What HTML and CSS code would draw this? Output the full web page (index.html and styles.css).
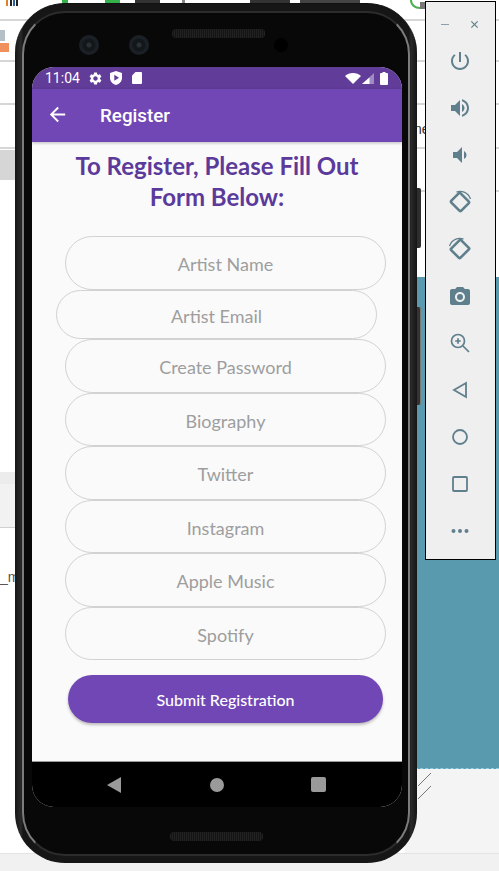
FILE: index.html
```html
<!DOCTYPE html>
<html lang="en">
<head>
  <meta charset="UTF-8" />
  <meta name="viewport" content="width=device-width, initial-scale=1" />
  <title>Register</title>
  <link rel="stylesheet" href="styles.css">
</head>
<body>

  <!-- desktop behind the emulator -->
  <div class="desk">
    <div class="desk-ticks"></div>
    <div class="desk-line line-a"></div>
    <div class="desk-line line-b"></div>
    <div class="desk-line line-c"></div>
    <div class="desk-line line-d"></div>
    <div class="desk-line line-e"></div>
    <div class="desk-chip chip-grey"></div>
    <div class="desk-chip chip-orange"></div>
    <div class="desk-block block-grey"></div>
    <div class="desk-block block-light"></div>
    <span class="desk-text text-m">_m</span>
    <span class="desk-text text-ne">ne</span>
    <svg class="desk-arc" width="16" height="10" viewBox="0 0 16 10">
      <path d="M2 0c0 5 4 8 9 8" stroke="#4caf50" stroke-width="2" fill="none"/>
      <rect x="11" y="2" width="5" height="7" fill="#777"/>
    </svg>
    <div class="desk-teal"></div>
    <div class="desk-lower"></div>
    <div class="desk-footer"></div>
    <svg class="desk-grip" width="16" height="28" viewBox="0 0 16 28">
      <path d="M1 14 14 1M1 27 14 14" stroke="#777" stroke-width="1" fill="none"/>
    </svg>
  </div>

  <div class="side-key key-top"></div>
  <div class="side-key key-low"></div>

  <div class="phone">
    <div class="rim">
      <div class="bezel-top">
        <div class="cam"></div>
        <div class="cam"></div>
        <div class="speaker"></div>
        <div class="sensor"></div>
      </div>

      <div class="screen">
        <div class="statusbar">
          <span class="clock">11:04</span>
          <svg class="st-gear" viewBox="0 0 24 24"><path d="M19.14 12.94c.04-.3.06-.61.06-.94 0-.32-.02-.64-.07-.94l2.03-1.58c.18-.14.23-.41.12-.61l-1.92-3.32c-.12-.22-.37-.29-.59-.22l-2.39.96c-.5-.38-1.03-.7-1.62-.94l-.36-2.54c-.04-.24-.24-.41-.48-.41h-3.84c-.24 0-.43.17-.47.41l-.36 2.54c-.59.24-1.13.57-1.62.94l-2.39-.96c-.22-.08-.47 0-.59.22L2.74 8.87c-.12.21-.08.47.12.61l2.03 1.58c-.05.3-.09.63-.09.94s.02.64.07.94l-2.03 1.58c-.18.14-.23.41-.12.61l1.92 3.32c.12.22.37.29.59.22l2.39-.96c.5.38 1.03.7 1.62.94l.36 2.54c.05.24.24.41.48.41h3.84c.24 0 .44-.17.47-.41l.36-2.54c.59-.24 1.13-.56 1.62-.94l2.39.96c.22.08.47 0 .59-.22l1.92-3.32c.12-.22.07-.47-.12-.61l-2.01-1.58zM12 15.6c-1.98 0-3.6-1.62-3.6-3.6s1.62-3.6 3.6-3.6 3.6 1.62 3.6 3.6-1.62 3.6-3.6 3.6z"/></svg>
          <svg class="st-shield" viewBox="0 0 12 14"><path fill-rule="evenodd" d="M6 0 12 2v5c0 3.3-2.5 6-6 7C2.500 13 0 10.300 0 7V2zM4.300 3.800v6L9 6.800z"/></svg>
          <svg class="st-sd" viewBox="0 0 10 12"><path d="M3.500 0H9a1 1 0 0 1 1 1v10a1 1 0 0 1-1 1H1a1 1 0 0 1-1-1V3.500z"/></svg>
          <span class="st-gap"></span>
          <svg class="st-wifi" viewBox="0 0 16 11"><path d="M0 3C2 1.200 4.800 0 8 0s6 1.200 8 3L8 11z"/></svg>
          <svg class="st-signal" viewBox="0 0 12 11"><path d="M12 0v11H0z" opacity=".4"/><path d="M7.500 4.500V11H0z"/></svg>
          <svg class="st-batt" viewBox="0 0 8 13"><path d="M2.500 0h3v1H7a1 1 0 0 1 1 1v10a1 1 0 0 1-1 1H1a1 1 0 0 1-1-1V2a1 1 0 0 1 1-1h1.500z"/></svg>
        </div>

        <header class="appbar">
          <svg class="back" viewBox="0 0 24 24"><path d="M20 11H7.830l5.590-5.590L12 4l-8 8 8 8 1.410-1.410L7.830 13H20v-2z"/></svg>
          <span class="appbar-title">Register</span>
        </header>

        <main class="content">
          <h1 class="heading">To Register, Please Fill Out<br>Form Below:</h1>
          <form class="form">
            <input class="field" type="text" placeholder="Artist Name">
            <input class="field field-email" type="text" placeholder="Artist Email">
            <input class="field" type="password" placeholder="Create Password">
            <input class="field" type="text" placeholder="Biography">
            <input class="field" type="text" placeholder="Twitter">
            <input class="field" type="text" placeholder="Instagram">
            <input class="field" type="text" placeholder="Apple Music">
            <input class="field" type="text" placeholder="Spotify">
            <button class="submit" type="button">Submit Registration</button>
          </form>
        </main>

        <nav class="navbar">
          <svg class="nav-back" viewBox="0 0 14 16"><path d="M14 0v16L0 8z"/></svg>
          <div class="nav-home"></div>
          <div class="nav-recent"></div>
        </nav>
      </div>

      <div class="bezel-bottom">
        <div class="speaker"></div>
      </div>
    </div>
  </div>

  <!-- emulator tool window -->
  <aside class="tools">
    <div class="tools-head">
      <span class="win-min"></span>
      <svg class="win-close" viewBox="0 0 10 10"><path d="M1.500 1.500l7 7M8.500 1.500l-7 7"/></svg>
    </div>
    <svg class="tool" viewBox="0 0 24 24"><path d="M13 3h-2v10h2V3zm4.830 2.170l-1.420 1.420C17.990 7.860 19 9.810 19 12c0 3.870-3.130 7-7 7s-7-3.130-7-7c0-2.190 1.010-4.140 2.580-5.420L6.170 5.170C4.230 6.820 3 9.260 3 12c0 4.970 4.030 9 9 9s9-4.030 9-9c0-2.740-1.230-5.180-3.170-6.830z"/></svg>
    <svg class="tool" viewBox="0 0 24 24"><path d="M3 9v6h4l5 5V4L7 9H3zm13.500 3c0-1.770-1.020-3.290-2.500-4.030v8.050c1.480-.73 2.500-2.250 2.500-4.020zM14 3.230v2.060c2.890.86 5 3.540 5 6.710s-2.110 5.850-5 6.710v2.060c4.010-.91 7-4.490 7-8.770s-2.990-7.860-7-8.770z"/></svg>
    <svg class="tool" viewBox="0 0 24 24"><path d="M18.500 12c0-1.770-1.020-3.290-2.500-4.030v8.050c1.480-.73 2.500-2.250 2.500-4.020zM5 9v6h4l5 5V4L9 9H5z"/></svg>
    <svg class="tool tool-line" viewBox="0 0 24 24"><rect x="5" y="5.500" width="14" height="13" rx="1" transform="rotate(45 12 12)"/><path d="M8.500 2.200C12.500.2 20 1.500 22.500 9" stroke-width="1.300"/></svg>
    <svg class="tool tool-line" viewBox="0 0 24 24"><rect x="5" y="5.500" width="14" height="13" rx="1" transform="rotate(-45 12 12)"/><path d="M15.500 2.200C11.500.2 4 1.500 1.500 9" stroke-width="1.300"/></svg>
    <svg class="tool" viewBox="0 0 24 24"><path d="M9 3L7.170 5H4c-1.100 0-2 .9-2 2v12c0 1.100.9 2 2 2h16c1.100 0 2-.9 2-2V7c0-1.100-.9-2-2-2h-3.170L15 3H9zm3 15c-2.760 0-5-2.240-5-5s2.240-5 5-5 5 2.240 5 5-2.240 5-5 5z"/><circle cx="12" cy="13" r="3"/></svg>
    <svg class="tool tool-line" viewBox="0 0 24 24"><circle cx="10" cy="10" r="6.500" stroke-width="1.700"/><path d="M15 15l6 6M10 7.200v5.600M7.200 10h5.600" stroke-width="1.700"/></svg>
    <svg class="tool tool-line" viewBox="0 0 24 24"><path d="M18 5v14L6 12z" stroke-width="1.800"/></svg>
    <svg class="tool tool-line" viewBox="0 0 24 24"><circle cx="12" cy="12" r="7" stroke-width="1.800"/></svg>
    <svg class="tool tool-line" viewBox="0 0 24 24"><rect x="5" y="5" width="14" height="14" rx="1" stroke-width="1.800"/></svg>
    <svg class="tool" viewBox="0 0 24 24"><circle cx="5.500" cy="12" r="2"/><circle cx="12" cy="12" r="2"/><circle cx="18.500" cy="12" r="2"/></svg>
  </aside>

</body>
</html>
```

FILE: styles.css
```css
html, body {
  margin: 0;
  height: 871px;
  overflow: hidden;
  background: #ffffff;
  font-family: "Lato", "Open Sans", sans-serif;
}

/* desktop scraps */
.desk {
  position: absolute;
  inset: 0;
}
.desk-ticks {
  position: absolute;
  left: 0;
  top: 0;
  width: 425px;
  height: 6px;
  background: linear-gradient(90deg,
    #fff 6px, #d9822b 6px 8px, #fff 8px 10px, #222 10px 12px, #fff 12px 13px, #2b5fa8 13px 15px, #fff 15px 16px, #222 16px 18px,
    #fff 18px 62px, #36b24a 62px 68px, #fff 68px 105px, #36b24a 105px 120px, #fff 120px 135px, #333 135px 160px,
    #fff 160px 182px, #888 182px 185px, #fff 185px 250px, #333 250px 290px, #fff 290px 300px, #444 300px 360px, #fff 360px);
}
.desk-line {
  position: absolute;
  left: 0;
  right: 0;
  height: 2px;
  background: #d6d6d6;
}
.line-a { top: 19px; }
.line-b { top: 60px; }
.line-c { top: 103px; }
.line-d { top: 147px; }
.line-e {
  top: 190px;
  left: 405px;
}
.desk-chip {
  position: absolute;
  left: 0;
}
.chip-grey {
  top: 30px;
  width: 5px;
  height: 11px;
  background: #b4c0c6;
}
.chip-orange {
  top: 43px;
  width: 9px;
  height: 9px;
  background: #f0905c;
}
.desk-block {
  position: absolute;
  left: 0;
  width: 30px;
}
.block-grey {
  top: 150px;
  height: 30px;
  background: #d6d6d6;
}
.block-light {
  top: 472px;
  height: 56px;
  box-sizing: border-box;
  background: #f2f2f2;
  border-top: 12px solid #ececec;
  border-bottom: 1px solid #d0d0d0;
}
.desk-text {
  position: absolute;
  font-family: "Liberation Sans", sans-serif;
  font-size: 14px;
  color: #555;
}
.text-m {
  left: 0;
  top: 569px;
}
.text-ne {
  left: 414px;
  top: 121px;
  color: #333;
}
.desk-arc {
  position: absolute;
  left: 409px;
  top: 0;
}
.desk-teal {
  position: absolute;
  left: 405px;
  right: 0;
  top: 277px;
  height: 491px;
  background: #5a9aaf;
  border-bottom: 1px dashed #8fd0e2;
}
.desk-lower {
  position: absolute;
  left: 405px;
  right: 0;
  top: 769px;
  height: 84px;
  background: #f4f4f4;
}
.desk-footer {
  position: absolute;
  left: 0;
  right: 0;
  top: 853px;
  bottom: 0;
  background: #f1f1f1;
  border-top: 1px solid #e4e4e4;
}
.desk-grip {
  position: absolute;
  left: 417px;
  top: 772px;
}

/* phone */
.side-key {
  position: absolute;
  left: 410px;
  width: 11px;
  background: #2e2e2e;
  border-radius: 2px;
}
.key-top {
  top: 188px;
  height: 60px;
}
.key-low {
  top: 307px;
  height: 98px;
  background: #333;
  border-right: 1px solid #777;
  box-sizing: border-box;
}
.phone {
  position: absolute;
  left: 15px;
  top: 3px;
  width: 402px;
  height: 860px;
  box-sizing: border-box;
  padding: 7px;
  border-radius: 50px;
  background: linear-gradient(90deg, #161616, #2a2a2a 6px, #161616 8px calc(100% - 8px), #2a2a2a calc(100% - 6px), #161616);
  border-top: 1px solid #111;
}
.rim {
  height: 100%;
  box-sizing: border-box;
  display: flex;
  flex-direction: column;
  padding: 0 6px 0 8px;
  border: 2px solid #7c7c7c;
  border-top-color: #2c2c2c;
  border-bottom-color: #2c2c2c;
  border-radius: 43px;
  background: #080808;
}
.bezel-top {
  height: 54px;
  flex: none;
  display: flex;
  align-items: flex-start;
  padding: 22px 0 0 47px;
  box-sizing: border-box;
}
.cam {
  width: 20px;
  height: 20px;
  margin-right: 30px;
  border-radius: 50%;
  background: radial-gradient(circle, #2b3034 0 2px, #12171a 3px 6px, #1a2025 7px);
}
.speaker {
  width: 93px;
  height: 9px;
  border-radius: 4px;
  background: repeating-linear-gradient(90deg, #222 0 1px, #141414 1px 2px);
}
.bezel-top .speaker {
  margin: -6px 0 0 -7px;
}
.sensor {
  width: 14px;
  height: 14px;
  margin: 3px 0 0 9px;
  border-radius: 50%;
  background: #000;
}
.screen {
  flex: 1;
  display: flex;
  flex-direction: column;
  border-radius: 22px;
  overflow: hidden;
  background: #fafafa;
}
.bezel-bottom {
  height: 47px;
  flex: none;
  box-sizing: border-box;
  padding: 25px 0 0 138px;
}

/* status bar */
.statusbar {
  height: 22px;
  flex: none;
  display: flex;
  align-items: center;
  padding: 0 14px 0 13px;
  background: #613c99;
  color: #fff;
  font-family: "Roboto", sans-serif;
  font-size: 14px;
}
.statusbar svg {
  fill: #fff;
  flex: none;
}
.clock {
  width: 34px;
}
.st-gear {
  width: 15px;
  height: 15px;
  margin-left: 9px;
}
.st-shield {
  width: 12px;
  height: 14px;
  margin-left: 7px;
}
.st-sd {
  width: 10px;
  height: 12px;
  margin-left: 10px;
}
.st-gap {
  flex: 1;
}
.st-wifi {
  width: 16px;
  height: 11px;
}
.st-signal {
  width: 12px;
  height: 11px;
  margin-left: 1px;
}
.st-batt {
  width: 8px;
  height: 13px;
  margin-left: 6px;
}

/* app bar */
.appbar {
  height: 53px;
  flex: none;
  display: flex;
  align-items: center;
  padding-left: 14px;
  background: #7147b5;
  box-shadow: 0 1px 3px rgba(0, 0, 0, .25);
  z-index: 1;
}
.back {
  width: 23px;
  height: 23px;
  fill: #fff;
  margin-bottom: 2px;
}
.appbar-title {
  margin-left: 31px;
  color: #fff;
  font-family: "Roboto", sans-serif;
  font-weight: 500;
  font-size: 18.800px;
}

/* form */
.content {
  flex: 1;
  padding-top: 8px;
}
.heading {
  margin: 0;
  text-align: center;
  font-size: 24px;
  line-height: 31px;
  font-weight: 700;
  color: #5b3a9b;
}
.form {
  display: flex;
  flex-direction: column;
  align-items: flex-start;
  margin-top: 24px;
  padding-left: 33px;
}
.field {
  width: 321px;
  height: 53.500px;
  box-sizing: border-box;
  padding: 3px 16px 0;
  border: 1px solid #d2d2d2;
  border-radius: 27px;
  background: transparent;
  text-align: center;
  font-family: inherit;
  font-size: 18px;
  outline: none;
}
.field::placeholder {
  color: #9e9e9e;
  opacity: 1;
}
.field-email {
  height: 49.500px;
  margin-left: -9px;
}
.submit {
  width: 315px;
  height: 48px;
  margin: 15px 0 0 3px;
  border: none;
  border-radius: 24px;
  background: #7147b5;
  box-shadow: 0 2px 3px rgba(0, 0, 0, .25);
  color: #fff;
  font-family: inherit;
  font-size: 16px;
  font-weight: 500;
}

/* android nav */
.navbar {
  height: 46px;
  flex: none;
  display: flex;
  align-items: center;
  padding-left: 75px;
  box-sizing: border-box;
  border-top: 1px solid #999;
  background: #000;
}
.nav-back {
  width: 14px;
  height: 16px;
  fill: #9a9a9a;
}
.nav-home {
  width: 14px;
  height: 14px;
  margin-left: 89px;
  border-radius: 50%;
  background: #9a9a9a;
}
.nav-recent {
  width: 15px;
  height: 15px;
  margin-left: 87px;
  border-radius: 2px;
  background: #9a9a9a;
}

/* emulator tools */
.tools {
  position: absolute;
  left: 425px;
  top: 1px;
  width: 71px;
  height: 559px;
  box-sizing: border-box;
  display: flex;
  flex-direction: column;
  align-items: center;
  padding-right: 1px;
  border: 1px solid #000;
  background: #efefef;
}
.tools-head {
  width: 100%;
  height: 44px;
  flex: none;
  display: flex;
  align-items: center;
  box-sizing: border-box;
  padding: 0 15px 0 15px;
  justify-content: space-between;
  margin-bottom: 3px;
}
.win-min {
  width: 8px;
  height: 1px;
  background: #86a0ac;
}
.win-close {
  width: 9px;
  height: 9px;
  fill: none;
  stroke: #5f7f8d;
  stroke-width: 1.300;
}
.tool {
  width: 24px;
  height: 24px;
  flex: none;
  fill: #5f7f8d;
  margin-bottom: 23px;
}
.tool-line {
  fill: none;
  stroke: #5f7f8d;
  stroke-width: 2.600;
}
```
